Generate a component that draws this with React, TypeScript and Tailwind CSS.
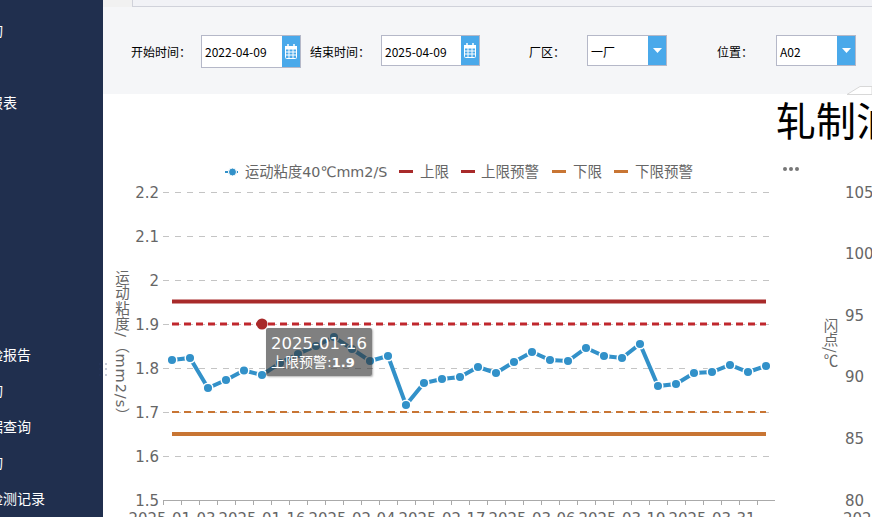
const uiFont = "font-['Noto_Sans_CJK_SC','Open_Sans',sans-serif]";
const chartFont = "font-['DejaVu_Sans','Noto_Sans_CJK_SC',sans-serif]";

// sidebar rows, 36px apart; text runs off the left edge like in the scrolled page
const navRows = ['查询', '', '月报表', '', '', '', '', '', '', '化验报告', '查询', '数据查询', '查询', '油检测记录'];

const points: [number, number][] = [
  [172, 360], [190, 358], [208, 388], [226, 380], [244, 370.5], [262, 375], [280, 363], [298, 354],
  [316, 346], [334, 337], [352, 349], [370, 361], [388, 356], [406, 405], [424, 383], [442, 379],
  [460, 377], [478, 367], [496, 373], [514, 362], [532, 352], [550, 360], [568, 361], [586, 348],
  [604, 356], [622, 358], [640, 344], [658, 386], [676, 384], [694, 373], [712, 372], [730, 365],
  [748, 372], [766, 366],
];

const yTicks: [string, number][] = [
  ['2.2', 192], ['2.1', 236], ['2', 280], ['1.9', 324], ['1.8', 368], ['1.7', 412], ['1.6', 456], ['1.5', 500],
];

const xLabels: [string, number][] = [
  ['2025-01-03', 172], ['2025-01-16', 262], ['2025-02-04', 352], ['2025-02-17', 442],
  ['2025-03-06', 532], ['2025-03-19', 622], ['2025-03-31', 712],
];

const rightTicks: [string, number][] = [
  ['105', 192], ['100', 253], ['95', 315], ['90', 376], ['85', 438], ['80', 500],
];

function CalendarIcon() {
  return (
    <svg width="12" height="15" viewBox="0 0 12 15" fill="none" stroke="#fff" strokeWidth="1">
      <rect x="0.5" y="2.5" width="11" height="12" rx="1" />
      <rect x="0.5" y="2.5" width="11" height="2.5" fill="#fff" />
      <path d="M0.5 8H11.5M0.5 11H11.5M4 5V14.5M8 5V14.5" />
      <path d="M3 0V2.5M9 0V2.5" strokeWidth="1.5" />
    </svg>
  );
}

function DateField({ value, height }: { value: string; height: string }) {
  return (
    <div className={`flex w-full border border-[#b5b8c8] bg-white ${height}`}>
      <span className="flex-1 pl-[3px] text-xs leading-[31px] text-black">{value}</span>
      <span className="flex w-[18px] items-center justify-center bg-[#4aa9ea]">
        <CalendarIcon />
      </span>
    </div>
  );
}

function SelectField({ value }: { value: string }) {
  return (
    <div className="flex h-[31px] w-20 border border-[#b5b8c8] bg-white">
      <span className="flex-1 pl-[3px] text-xs leading-[31px] text-black">{value}</span>
      <span className="flex w-[18px] items-center justify-center bg-[#4aa9ea]">
        <svg width="9" height="5" viewBox="0 0 9 5">
          <path d="M0 0H9L4.5 5Z" fill="#fff" />
        </svg>
      </span>
    </div>
  );
}

function LegendLine({ x, color }: { x: number; color: string }) {
  return <line x1={x} x2={x + 14} y1={171.5} y2={171.5} stroke={color} strokeWidth={3} />;
}

function LeftChart() {
  return (
    <svg width="672" height="423" viewBox="103 94 672 423" className={`block ${chartFont}`}>
      {/* legend */}
      <line x1={225} x2={240} y1={172} y2={172} stroke="#3291c9" strokeWidth={2} strokeDasharray="3 2" />
      <circle cx={232.5} cy={172} r={4} fill="#3291c9" stroke="#fff" />
      <text x={245} y={177} className="fill-[#666] text-[14.3px]">运动粘度40℃mm2/S</text>
      <LegendLine x={399} color="#a82a2a" />
      <text x={420} y={177} className="fill-[#666] text-[14.5px]">上限</text>
      <LegendLine x={461} color="#a82a2a" />
      <text x={481} y={177} className="fill-[#666] text-[14.5px]">上限预警</text>
      <LegendLine x={552} color="#c87533" />
      <text x={573} y={177} className="fill-[#666] text-[14.5px]">下限</text>
      <LegendLine x={614} color="#c87533" />
      <text x={635} y={177} className="fill-[#666] text-[14.5px]">下限预警</text>

      {/* y axis */}
      {yTicks.map(([label, y]) => (
        <g key={label}>
          {y < 500 && <line x1={163} x2={770} y1={y + 0.5} y2={y + 0.5} stroke="#c4c4c4" strokeDasharray="6 6" />}
          <text x={159} y={y + 6} textAnchor="end" className="fill-[#666] text-[15px]">{label}</text>
        </g>
      ))}
      <text x={121} y={270} writingMode="vertical-rl" letterSpacing={1} className="fill-[#666] text-[14.5px]">
        运动粘度/（mm2/s）
      </text>

      {/* x axis */}
      <line x1={163} x2={775} y1={500.5} y2={500.5} stroke="#aaa" />
      {Array.from({ length: 35 }, (_, i) => 163.5 + i * 18).map((x) => (
        <line key={x} x1={x} x2={x} y1={500} y2={505} stroke="#aaa" />
      ))}
      {xLabels.map(([label, x]) => (
        <text key={label} x={x} y={524} textAnchor="middle" className="fill-[#666] text-[15px]">{label}</text>
      ))}

      {/* limits */}
      <line x1={172} x2={766} y1={301.5} y2={301.5} stroke="#a82a2a" strokeWidth={4} />
      <line x1={172} x2={766} y1={324} y2={324} stroke="#c0272d" strokeWidth={3} strokeDasharray="7 5" />
      <line x1={172} x2={766} y1={412} y2={412} stroke="#c87533" strokeWidth={2} strokeDasharray="7 5" />
      <line x1={172} x2={766} y1={434} y2={434} stroke="#c87533" strokeWidth={4} />
      <circle cx={262} cy={324} r={5.5} fill="#a82a2a" />

      {/* series */}
      <polyline
        points={points.map(([x, y]) => `${x},${y}`).join(' ')}
        fill="none"
        stroke="#3291c9"
        strokeWidth={4}
      />
      {points.map(([x, y]) => (
        <circle key={x} cx={x} cy={y} r={4.8} fill="#3291c9" stroke="#fff" strokeWidth={1.5} />
      ))}
    </svg>
  );
}

function RightChart() {
  return (
    <svg width="97" height="367" viewBox="775 150 97 367" className={`block ${chartFont}`}>
      <circle cx={785} cy={169} r={2} fill="#777" />
      <circle cx={791} cy={169} r={2} fill="#777" />
      <circle cx={797} cy={169} r={2} fill="#777" />
      <text x={831} y={318} writingMode="vertical-rl" className={`fill-[#666] text-[14.5px] ${uiFont}`}>
        闪点/<tspan className="[text-orientation:upright]">℃</tspan>
      </text>
      {rightTicks.map(([label, y]) => (
        <text key={label} x={845} y={y + 6} className="fill-[#666] text-[15px]">{label}</text>
      ))}
      <text x={843} y={524} className="fill-[#666] text-[15px]">2025-01-03</text>
    </svg>
  );
}

export default function App() {
  return (
    <div className={`flex h-[517px] w-[872px] overflow-hidden bg-white ${uiFont}`}>
      <aside className="h-full w-[103px] shrink-0 overflow-hidden bg-[#202f4e] pt-[12px]">
        {navRows.map((row, i) => (
          <div key={i} className="-ml-[25px] h-9 whitespace-nowrap text-sm leading-9 text-white">
            {row}
          </div>
        ))}
      </aside>

      <main className="relative flex min-w-0 flex-1 flex-col">
        {/* tab strip */}
        <div className="flex h-[7px] shrink-0 bg-[#f1f1f1]">
          <div className="ml-[29px] flex-1 border-b border-l border-[#d0d2da] bg-[#f1f2f6]" />
        </div>

        {/* filters */}
        <div className="flex h-[87px] shrink-0 items-start bg-[#f5f6f8] pl-[28px] pt-[28px] text-xs text-black">
          <span className="w-[70px] leading-[34px]">开始时间：</span>
          <div className="w-[100px]">
            <DateField value="2022-04-09" height="h-[33px]" />
          </div>
          <span className="ml-[9px] w-[71px] leading-[34px]">结束时间：</span>
          <div className="w-[99px]">
            <DateField value="2025-04-09" height="h-[31px]" />
          </div>
          <span className="ml-[49px] w-[58px] leading-[34px]">厂区：</span>
          <SelectField value="一厂" />
          <span className="ml-[50px] w-[59px] leading-[34px]">位置：</span>
          <SelectField value="A02" />
        </div>

        {/* charts */}
        <div className="flex min-h-0 flex-1">
          <div className="relative w-[672px] shrink-0">
            <LeftChart />
            <div className={`absolute left-[163px] top-[234px] h-12 w-[106px] rounded-[2px] bg-[rgba(50,50,50,0.62)] pl-[5px] pt-[5px] text-white shadow-[1px_1px_2px_rgba(0,0,0,0.3)] ${chartFont}`}>
              <div className="text-[16.5px] leading-[21px]">2025-01-16</div>
              <div className="text-[14px] leading-[17px]">
                上限预警:<span className="text-[13px] font-bold">1.9</span>
              </div>
            </div>
          </div>
          <div className="min-w-0 flex-1 overflow-hidden">
            <div className="h-14 whitespace-nowrap pl-[1px] text-[40px] leading-[50px] text-black">轧制油液</div>
            <RightChart />
          </div>
        </div>

        {/* splitter grip */}
        <svg width="9" height="14" viewBox="0 0 9 14" className="absolute -left-[4px] top-[363px]">
          <path d="M0.5 0.5h1v1h-1zM6.5 0.5h1v1h-1zM0.5 5.5h1v1h-1zM6.5 5.5h1v1h-1zM0.5 11.5h1v1h-1zM6.5 11.5h1v1h-1z" fill="#2a3a6a" />
        </svg>

        {/* corner of the next tab */}
        <svg width="25" height="9" viewBox="0 0 25 9" className="absolute right-0 top-[86px]">
          <path d="M0 8.5L13 0.5H25V8.5Z" fill="#fff" stroke="#d8d8d8" />
        </svg>
      </main>
    </div>
  );
}
